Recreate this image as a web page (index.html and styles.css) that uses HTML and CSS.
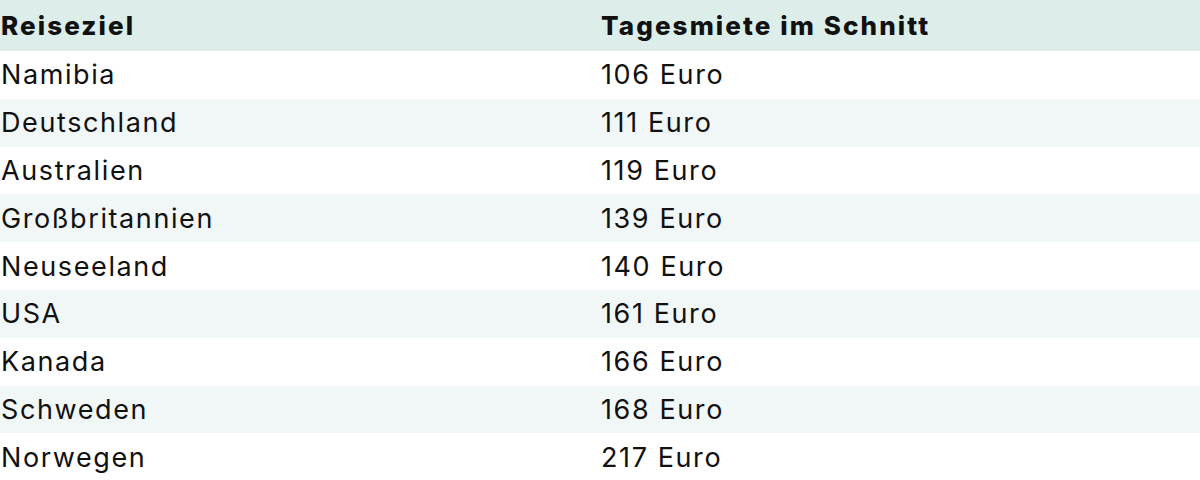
FILE: index.html
```html
<!DOCTYPE html>
<html lang="de">
<head>
<meta charset="utf-8">
<link rel="stylesheet" href="styles.css">
</head>
<body>
<table class="rent-table">
  <thead>
    <tr><th>Reiseziel</th><th>Tagesmiete im Schnitt</th></tr>
  </thead>
  <tbody>
    <tr><td>Namibia</td><td>106 Euro</td></tr>
    <tr><td>Deutschland</td><td>111 Euro</td></tr>
    <tr><td>Australien</td><td>119 Euro</td></tr>
    <tr><td>Großbritannien</td><td>139 Euro</td></tr>
    <tr><td>Neuseeland</td><td>140 Euro</td></tr>
    <tr><td>USA</td><td>161 Euro</td></tr>
    <tr><td>Kanada</td><td>166 Euro</td></tr>
    <tr><td>Schweden</td><td>168 Euro</td></tr>
    <tr><td>Norwegen</td><td>217 Euro</td></tr>
  </tbody>
</table>
</body>
</html>
```
FILE: styles.css
```css
html, body {
  margin: 0;
  padding: 0;
  background: #ffffff;
}
body {
  font-family: Inter, "Noto Sans", "Liberation Sans", sans-serif;
  color: #111111;
}
.rent-table {
  width: 1200px;
  border-collapse: collapse;
  table-layout: fixed;
}
.rent-table th,
.rent-table td {
  text-align: left;
  padding: 0 0 0 1px;
  vertical-align: middle;
}
.rent-table th {
  height: 50px;
  font-size: 26px;
  font-weight: 800;
  letter-spacing: 2.1px;
  background: #dcedea;
  padding-bottom: 1px;
}
.rent-table td {
  height: 47.8px;
  font-size: 27px;
  font-weight: 400;
  letter-spacing: 1.6px;
}
.rent-table tbody tr:nth-child(even) td {
  background: #f1f7f7;
}
```
